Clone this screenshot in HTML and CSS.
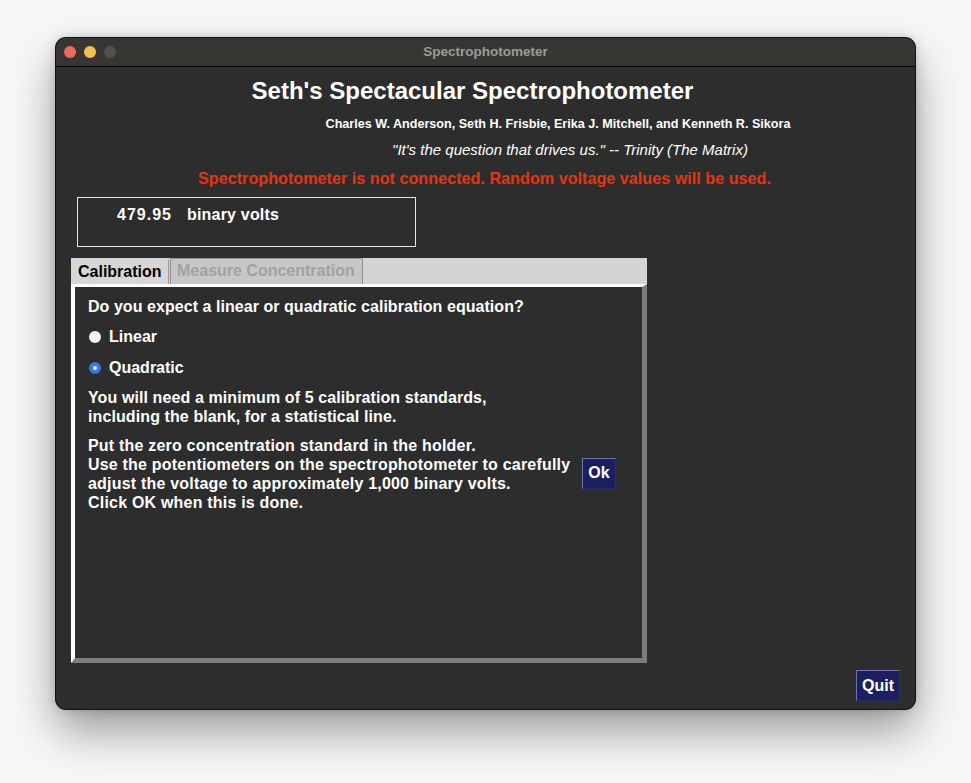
FILE: index.html
```html
<!DOCTYPE html>
<html>
<head>
<meta charset="utf-8">
<link rel="stylesheet" href="styles.css">
</head>
<body>
<div class="window">
  <div class="titlebar">
    <div class="lights">
      <span class="light red"></span>
      <span class="light yellow"></span>
      <span class="light gray"></span>
    </div>
    <div class="wintitle">Spectrophotometer</div>
  </div>
  <div class="content">
    <div class="line title">Seth's Spectacular Spectrophotometer</div>
    <div class="line authors">Charles W. Anderson, Seth H. Frisbie, Erika J. Mitchell, and Kenneth R. Sikora</div>
    <div class="line quote">"It's the question that drives us." -- Trinity (The Matrix)</div>
    <div class="line warning">Spectrophotometer is not connected. Random voltage values will be used.</div>
    <div class="voltbox">
      <span class="value">479.95</span>
      <span class="unit">binary volts</span>
    </div>
    <div class="notebook">
      <div class="tabs">
        <div class="tab active">Calibration</div>
        <div class="tab inactive">Measure Concentration</div>
      </div>
      <div class="panel">
        <div class="question">Do you expect a linear or quadratic calibration equation?</div>
        <div class="radio"><span class="dot"></span><span>Linear</span></div>
        <div class="radio"><span class="dot checked"></span><span>Quadratic</span></div>
        <div class="para">You will need a minimum of 5 calibration standards,<br>including the blank, for a statistical line.</div>
        <div class="step">
          <div class="para steptext">Put the zero concentration standard in the holder.<br>Use the potentiometers on the spectrophotometer to carefully<br>adjust the voltage to approximately 1,000 binary volts.<br>Click OK when this is done.</div>
          <button class="btn ok">Ok</button>
        </div>
      </div>
    </div>
    <div class="footer">
      <button class="btn quit">Quit</button>
    </div>
  </div>
</div>
</body>
</html>
```

FILE: styles.css
```css
html, body {
  margin: 0;
  padding: 0;
}
body {
  background: #f7f7f7;
  width: 971px;
  height: 783px;
  padding: 38px 0 0 56px;
  box-sizing: border-box;
  font-family: "Liberation Sans", Arial, sans-serif;
  overflow: hidden;
}
.window {
  width: 859px;
  height: 671px;
  border-radius: 10px;
  background: #2d2d2d;
  box-shadow: 0 0 0 1px #111, 0 22px 45px rgba(0,0,0,0.38), 0 0 12px rgba(0,0,0,0.2);
  display: flex;
  flex-direction: column;
  overflow: hidden;
}
.titlebar {
  height: 28px;
  background: #383633;
  border-bottom: 1px solid #050505;
  display: flex;
  align-items: center;
  position: relative;
  flex: none;
}
.lights {
  display: flex;
  gap: 8px;
  padding-left: 8px;
}
.light {
  width: 12px;
  height: 12px;
  border-radius: 50%;
  display: block;
}
.light.red { background: #ed6a5e; }
.light.yellow { background: #f4bf4f; }
.light.gray { background: #525150; }
.wintitle {
  position: absolute;
  left: 0;
  right: 0;
  top: 0;
  line-height: 28px;
  text-align: center;
  color: #9c9b99;
  font-weight: bold;
  font-size: 13.5px;
  pointer-events: none;
}
.content {
  flex: 1;
  display: flex;
  flex-direction: column;
  color: #ffffff;
}
.line {
  white-space: nowrap;
  text-align: center;
}
.title {
  font-size: 24px;
  font-weight: bold;
  line-height: 48px;
  height: 48px;
  padding-right: 26px;
}
.authors {
  font-size: 12.6px;
  font-weight: bold;
  line-height: 18px;
  height: 18px;
  padding-left: 145px;
}
.quote {
  font-size: 15px;
  font-style: italic;
  line-height: 24px;
  height: 24px;
  margin-top: 5px;
  padding-left: 169px;
}
.warning {
  font-size: 16.2px;
  font-weight: bold;
  color: #e5350f;
  line-height: 24px;
  height: 24px;
  margin-top: 4px;
  padding-right: 2px;
}
.voltbox {
  margin: 7px 0 0 21px;
  width: 339px;
  height: 50px;
  box-sizing: border-box;
  border: 1px solid #e8e8e8;
  padding: 7px 0 0 39px;
  display: flex;
  gap: 15px;
  font-size: 16px;
  font-weight: bold;
  line-height: 19px;
}
.value {
  letter-spacing: 1px;
}
.unit {
  letter-spacing: 0.2px;
}
.notebook {
  margin: 11px 0 0 15px;
  width: 576px;
}
.tabs {
  height: 26px;
  background: #d4d4d4;
  display: flex;
  align-items: flex-end;
  padding-left: 1px;
}
.tab {
  height: 25px;
  line-height: 25px;
  font-size: 16px;
  font-weight: bold;
  padding: 0 6px;
  box-sizing: border-box;
  border-radius: 2px 2px 0 0;
}
.tab.active {
  color: #000;
  background: #d6d6d6;
  border-right: 1px solid #9a9a9a;
  width: 97px;
}
.tab.inactive {
  color: #a2a2a2;
  background: #c7c7c7;
  border: 1px solid #8f8f8f;
  border-bottom: none;
  margin-left: 1px;
  width: 193px;
  height: 26px;
  line-height: 24px;
}
.panel {
  height: 379px;
  box-sizing: border-box;
  border-style: solid;
  border-width: 3px 5px 5px 4px;
  border-color: #ffffff #7c7c7c #7c7c7c #ffffff;
  padding: 10px 0 0 13px;
  font-size: 16px;
  font-weight: bold;
  line-height: 19px;
}
.question {
  height: 19px;
  letter-spacing: 0.05px;
}
.radio {
  display: flex;
  align-items: center;
  gap: 8px;
  height: 19px;
  margin-top: 11px;
  padding-left: 1px;
}
.radio + .radio {
  margin-top: 12px;
}
.dot {
  width: 12px;
  height: 12px;
  border-radius: 50%;
  background: #f2f2f2;
  box-sizing: border-box;
  flex: none;
}
.dot.checked {
  background: #3a74ee;
  border: 4px solid #3a74ee;
  background-clip: padding-box;
}
.dot.checked::after {
  content: "";
  display: block;
  width: 4px;
  height: 4px;
  border-radius: 50%;
  background: #fff;
}
.para {
  margin-top: 11px;
  letter-spacing: 0.1px;
}
.step {
  display: flex;
  align-items: center;
  gap: 12px;
  margin-top: 10px;
}
.steptext {
  margin-top: 0;
  width: 482px;
  flex: none;
  letter-spacing: 0.2px;
  white-space: nowrap;
}
.btn {
  font-family: "Liberation Sans", Arial, sans-serif;
  font-size: 16px;
  font-weight: bold;
  color: #fff;
  background: #1b1f5f;
  border: 1px solid;
  border-color: #7075a8 #2a2e66 #2a2e66 #7075a8;
  padding: 0;
  height: 31px;
  margin: 0;
}
.ok {
  width: 34px;
  margin-top: -2px;
}
.footer {
  margin-top: auto;
  display: flex;
  justify-content: flex-end;
  padding: 0 15px 8px 0;
}
.quit {
  width: 44px;
}
```
